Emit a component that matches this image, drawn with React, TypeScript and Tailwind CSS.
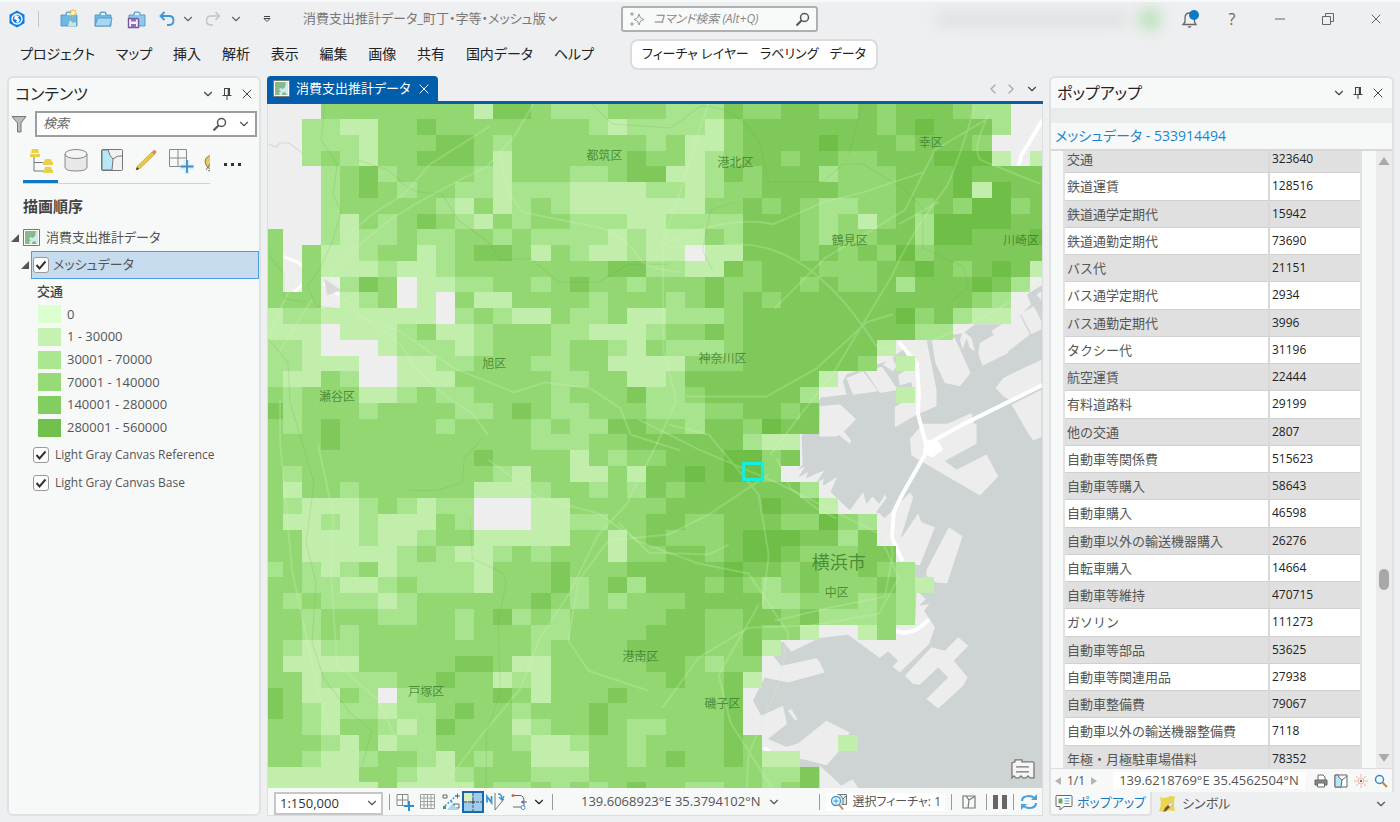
import type { ReactNode } from "react"
import { ChevronDown, ChevronLeft, ChevronRight, Minus, X } from "lucide-react"

const menus = ["プロジェクト", "マップ", "挿入", "解析", "表示", "編集", "画像", "共有", "国内データ", "ヘルプ"]

const legend = [
  { label: "0", color: "bg-[#dcffd0]" },
  { label: "1 - 30000", color: "bg-[#c4f2b0]" },
  { label: "30001 - 70000", color: "bg-[#abe691]" },
  { label: "70001 - 140000", color: "bg-[#97db77]" },
  { label: "140001 - 280000", color: "bg-[#83ce60]" },
  { label: "280001 - 560000", color: "bg-[#71c04b]" },
]

const rows = [
  ["交通", "323640"],
  ["鉄道運賃", "128516"],
  ["鉄道通学定期代", "15942"],
  ["鉄道通勤定期代", "73690"],
  ["バス代", "21151"],
  ["バス通学定期代", "2934"],
  ["バス通勤定期代", "3996"],
  ["タクシー代", "31196"],
  ["航空運賃", "22444"],
  ["有料道路料", "29199"],
  ["他の交通", "2807"],
  ["自動車等関係費", "515623"],
  ["自動車等購入", "58643"],
  ["自動車購入", "46598"],
  ["自動車以外の輸送機器購入", "26276"],
  ["自転車購入", "14664"],
  ["自動車等維持", "470715"],
  ["ガソリン", "111273"],
  ["自動車等部品", "53625"],
  ["自動車等関連用品", "27938"],
  ["自動車整備費", "79067"],
  ["自動車以外の輸送機器整備費", "7118"],
  ["年極・月極駐車場借料", "78352"],
]

// one character per mesh cell, the digit is the class, "." has no cell
const mesh = [
  "...33333333144322233" + "322243344334344432" + "2..",
  "..221133433333333212" + "222134444444345444" + "2..",
  "..222133344323333333" + "231134444544434443" + "...",
  "..232133444313333334" + "331234434433444555" + "1.1",
  "...23423333213332234" + "411243444233344454" + "444",
  "...23432332212221111" + "221233444433344451" + "544",
  "...23333321312321111" + "111334343223343435" + "534",
  "...21323432132332221" + "122224443231342555" + "544",
  "3..21223223323222212" + "111324443233442554" + "445",
  "3.311233123443132112" + "11.114443434353444" + "444",
  "3.311121123333333344" + "221143444333445434" + "541",
  "3.3.243.112233234332" + "333433443433424445" + "42.",
  "333.123.1.3113333233" + "323434344444444443" + "2..",
  "122111111.2321132231" + "122234444444453421" + "1..",
  "111.1112311233322111" + "23343444444444" + "22.....",
  "221...12221233323321" + "322234444444" + "1........",
  "22111..1122333223311" + "11333444444" + "3.1.......",
  "21132..1113333322331" + "124444444" + "1...........",
  "32333112322333323334" + "22344444" + "2....1.......",
  "42333233332234322333" + "2223344" + "34............",
  "32343333323333232244" + "33244354" + "4............",
  "33343333333333222334" + "44444211" + ".............",
  "33333333333433331323" + "34445534" + ".............",
  "32333333333321331131" + "4454553" + "..............",
  "31332333333111233232" + "434444442" + "............",
  "32111232122...113333" + "3444445441" + "...........",
  "31121211132...112233" + "443344433532" + ".........",
  "33111211233111113313" + "433345554424" + ".........",
  "33111112321123233313" + "3443455433344" + "........",
  "23212312222133343334" + "44445443433432" + ".......",
  "33221123222133342342" + "444343234333421" + "......",
  "32322212333333432323" + "33444422333232" + ".......",
  "33233322332342323333" + "34433443422232" + ".......",
  "33232333332333223333" + "444334331..13" + "........",
  "32122333333333233334" + "4443341" + "..............",
  "31111333334431133333" + "443233" + "...............",
  "33122223343312133333" + "343341" + "...............",
  "431132.2333343133343" + "33334" + "................",
  "43212212234332333433" + "33334" + "................",
  "33213321243331233432" + "23334" + "................",
  "33321312233332112332" + "333343....1" + "..........",
  "33211233213233111332" + "34334311" + ".............",
  "11111332112333222333" + "333333224" + "............",
  "11111131111322323234" + "332233234" + "............",
]

const meshColors: Record<string, string> = {
  "1": "#c1eeaa",
  "2": "#a8e38d",
  "3": "#93d772",
  "4": "#7fc95b",
  "5": "#6fbe48",
}

const cellX = (c: number) => (c === 0 ? 0 : 14.7 + (c - 1) * 19.13)
const cellY = (r: number) => (r === 0 ? 0 : 15 + (r - 1) * 15.77)

const labels = [
  { x: 336, y: 56, name: "都筑区" },
  { x: 467, y: 63, name: "港北区" },
  { x: 662, y: 43, name: "幸区" },
  { x: 581, y: 141, name: "鶴見区" },
  { x: 752, y: 141, name: "川崎区" },
  { x: 226, y: 264, name: "旭区" },
  { x: 454, y: 259, name: "神奈川区" },
  { x: 69, y: 297, name: "瀬谷区" },
  { x: 568, y: 492, name: "中区" },
  { x: 372, y: 556, name: "港南区" },
  { x: 158, y: 591, name: "戸塚区" },
  { x: 454, y: 603, name: "磯子区" },
]

const MeshCells = () => {
  const cells: ReactNode[] = []
  mesh.forEach((line, r) => {
    let c = 0
    while (c < line.length) {
      const start = c
      const value = line[start]
      while (c < line.length && line[c] === value) c++
      if (value === ".") continue
      const x = Math.round(cellX(start))
      const y = Math.round(cellY(r))
      cells.push(
        <rect key={`${r}-${start}`} x={x} y={y} width={Math.round(cellX(c)) - x} height={Math.round(cellY(r + 1)) - y} fill={meshColors[value]} />
      )
    }
  })
  return <g shapeRendering="crispEdges">{cells}</g>
}

const MapCanvas = () => (
  <svg viewBox="0 0 773 684" preserveAspectRatio="xMinYMin slice" className="block h-full w-full bg-[#eeeeee]" role="img" aria-label="地図">
    {/* harbour */}
    <path
      fill="#ced3d4"
      d="M773 181L758 190 762 200 742 220 706 220 694 229 665 233 640 240 621 256 578 270 574 277 578 290 552 293 533 332 534 360 512 385 552 378 580 405 611 409 640 440 640 500 560 530 497 540 480 600 497 635 552 684 773 684z"
    />
    <g transform="translate(381 -28) scale(.3333)" fill="#ededee">
      <path d="M1024 764l84-52 32 63-74 57zM1112 712l40-22 22 45v25l-30 14zM1160 655l14-10v27zM990 800l55-32 30 62-77 38-13-38zM845 785h70l47 105-32 40-45-10-28-60zM930 790l10-25 25 20 10 40-15-10-10-30-12 35zM765 805l65-15 30 150v50l-60 25-65 38v-62l25-14 30-10-5-50-35 10-5-30 30-20zM590 905l50-20 45 60-75 10zM647 885l50-14 47 70-54 9zM700 865l25-25 15 30-10 15zM511 885l60 0 12 60-72 12zM511 990l60-6 48 45-40 40-20 11h-50zM1037 935l23-30 114-55v80l-89 45-25-15zM1085 985l89-45v140h-34zM820 1075l145-65 15 70H820z" />
    </g>
    <g transform="translate(381 326) scale(.3333)" fill="#ededee">
      <path d="M780 25l40-45h160v60L885 92l35 26 90-46 35 66-55 57L785 75zM1130 0h44v20l-24 10zM550 0h30l25 30-5 10zM396 102h50l-10 20 30-15-20 35 30-18-8 20 56-25-25 40 24-15-6 25 45-30-25 60 30 5v40l-90-40-90-55zM600 240l40-55 10 35 18-22 20 22 18-28 5 10-30 40-10 50zM685 280l50-45 45-50 10 15-40 132h-65zM750 330l55-82 10 27 40 15-45 115-35-10-30-30zM830 418l67-128 41 27-46 141-32-2-30-20zM800 480l28 25-20 20 30-5-15 20 32 50-17 50-88 85-22-17 17-18-30-28-25 20-95-70-85 10-85 41-30-38-60 0v-60h172l290 0z" />
      <path d="M281 640h60l54 65 105-22 10 10 15 32-110 30-70-15-35 70 25 45 65-30 12 55-57 45 55 23 35-10 85-68 70 35-30 55-40 43-70-18-100 0-80-80zM415 840l10-5 18 30-6 5zM765 735l80-85 40 10 40-40 30 25-43 45 41 50-13 25-75 68-35-28 65-65-30-30-55 52-20-2zM511 1005l64 60 33-20 19 28H511z" />
    </g>
    <g fill="none" stroke="#fff" strokeLinecap="round" strokeLinejoin="round">
      <path d="M773 17l-21 35-3 13M631 239l17 20 2 30-1 20 9 34M773 281l-81 40-20 11-14 8M659 345l-25 44-9 18-2 26 10 22M497 644l20 17 18 6M611 516q24 24 48 0" strokeWidth="4" />
      <path d="M657 336l12 2 4 7-10 7-8-4z" fill="#fff" strokeWidth="2" />
      <path d="M14 152l16 6 14 14-18 16M56 180l14 10" strokeWidth="3" />
    </g>
    <path d="M56 174l17 12-14 5z" fill="#d9d9d9" />
    <path d="M0 40l8 3 4-4h9l28 21 18 8" fill="none" stroke="#d6d6d8" />
    <MeshCells />
    {/* roads and rivers seen through the mesh */}
    <g fill="none" stroke="#d4f5bd" strokeOpacity=".24" strokeWidth="2" strokeLinejoin="round">
      <path d="M57 178q40-50 90-78t70-36l28-30 20-34M222 22l-60 38-26 30-32 20-28 24M232 50q5 38 22 58l80 16q25 10 40 34 12 8 40 10" />
      <path d="M76 194l18 20q40 20 50 45 25 30 60 50l16 22M90 212l40 14 56 38 60 24 30-10 46 6 30 20 10 26 50 16" />
      <path d="M0 235l14-34 20-40M10 250l34-55M12 296v40l12 130 26 120 10 32M50 340l15 70-2 60 6 90 40 34 20 42" />
      <path d="M440 0l-14 40-18 60-14 36 1 110 13 50-20 44-30 60-28 30-30 60-30 46-18 48-40 48-30 40" />
      <path d="M220 355l50 38 60 16 40 28 60 22 50 10 40 60-10 50-30 70-2 38 30 30M490 500l-40 70 12 48 42 66" />
      <path d="M397 144l60-3q80-10 150 100l20 8q90-28 170-90M506 204l50-50 80-48 30-60 50-30M706 2q-18 60-28 80-38 50-54 88l-60 100-32 40-30 40M418 292l80 0 50-28 50-46 26-8" />
      <path d="M395 140q60-30 110-20l50-22 40-10 60-20M630 120l40-22M720 10q-18 36-8 46l60 24" />
      <path d="M400 320l40 10 50 60 10 60-6 50M500 370l-60 40-40 20-60 6-30 40-10 60 20 30 60 20M370 315l60 30 80 34 100 50 20 44-20 36-70 12-60 2-50 30-36 50" />
      <path d="M620 420l4 30-8 42-60 12-50 12M508 354l14 30 26 20 20 10M460 440l-20 10-60-2-30-30" />
    </g>
    <g fill="none" stroke="#5a9a45" strokeOpacity=".16">
      <path d="M57 0l-4 36 16 24-4 30 8 18-8 28-14 30-12 16 10 20 18 2M0 150l16 20v24l22 4M90 56l30 10 20 18 10 4 24 2 16 26 30 22 12 18 30-2 28 24 40 0 30-18h40" />
      <path d="M324 0l20 20 58 4 30-22q40 0 60 40l8 36 54 0 20-18h20l40 24 20 20v40l40 18 6 20-22 20M594 0l-14 50" />
      <path d="M0 234l20 24 2 40 12 40 12 40-8 60 10 40-4 60 12 36 26 34 22 18-10 34M214 334l-18 20-2 24-26 8h-26M202 414l2 40 30 14 4 10-8 40 2 70-14 40v68M466 98l-24 8-8 40 10 20" />
    </g>
    <g fill="#397a27" fillOpacity=".8" className="font-['Noto_Sans_CJK_JP',sans-serif] text-xs">
      {labels.map((l) => (
        <text key={l.name} x={l.x} y={l.y} textAnchor="middle">{l.name}</text>
      ))}
      <text x="570" y="464" textAnchor="middle" className="text-lg">横浜市</text>
    </g>
    <rect x="475" y="359" width="19" height="16" fill="none" stroke="#14efe0" strokeWidth="3" />
    <g fill="#f5f5f5" stroke="#777" strokeWidth="1.3">
      <path d="M743 673v-15l3-1v-2h7v2h11q1 0 1 2v14h-4l-2-2-2 2h-3l-2-2-2 2h-3l-2-2z" />
      <path d="M747 662h13M747 667h13" />
    </g>
  </svg>
)

const MapIcon = () => (
  <svg viewBox="0 0 17 17" className="size-[17px] shrink-0">
    <path d="M.5.5h16v16H.5z" fill="#fff" stroke="#777" />
    <path d="M2 2h13v13H2z" fill="#cdeaf5" />
    <path d="M2 2h11l-1 5-2 2-3-1-1 2 2 1-2 2 1 2H2zM9 13l3-1 2 3H9z" fill="#86ba86" />
  </svg>
)

const PinIcon = () => (
  <svg viewBox="0 0 12 14" className="h-3.5 w-3 shrink-0" fill="none" stroke="#444">
    <path d="M3 1.5h6M3.5 1.5v7M8.5 1.5v7M1.5 8.5h9M6 9v4" />
    <path d="M7.5 2v6" strokeWidth="1.5" />
  </svg>
)

const SearchIcon = ({ className }: { className: string }) => (
  <svg viewBox="0 0 14 14" className={className} fill="none" stroke="currentColor" strokeWidth="1.5">
    <circle cx="8.5" cy="5.5" r="4" />
    <path d="M5.5 8.5l-5 5" strokeWidth="2" />
  </svg>
)

const Folder = ({ kind }: { kind: "new" | "open" | "save" }) => (
  <svg viewBox="0 0 20 20" className="size-5">
    <path d="M2 6h5V4q0-1 1-1h4q1 0 1 1v2h5v11H2z" fill={kind === "save" ? "#8ec8ea" : "#6db9e4"} stroke="#3f93c4" strokeWidth=".8" />
    <path d="M8 4h4v2H8z" fill="#eee" />
    {kind === "new" && (
      <>
        <path d="M9 17l2-6 3 3 3-1v4z" fill="#cfe9c6" />
        <path d="M14 0v8M10 4h8M11 1l6 6M17 1l-6 6" stroke="#e9c03c" strokeWidth="1.2" />
        <circle cx="14" cy="4" r="2" fill="#fff4b8" />
      </>
    )}
    {kind === "open" && <path d="M2 17l2.5-8H19l-2 8z" fill="#a6d6f0" stroke="#3f93c4" strokeWidth=".8" />}
    {kind === "save" && (
      <>
        <path d="M1.5 9.5h9l1 1v8h-10z" fill="#f6f2fb" stroke="#7353a5" strokeWidth="1.4" />
        <path d="M4 9.5h5v3H4zM4 15h5v3.5H4z" fill="#8b6fb7" />
      </>
    )}
  </svg>
)

const Checkbox = ({ id }: { id: string }) => (
  <span className="relative grid size-4 shrink-0 place-items-center">
    <input id={id} type="checkbox" defaultChecked className="peer size-4 appearance-none rounded-[3px] border border-[#9a9a9a] bg-white" />
    <svg viewBox="0 0 16 16" className="pointer-events-none absolute inset-0 size-4 opacity-0 peer-checked:opacity-100" fill="none" stroke="#333" strokeWidth="2">
      <path d="M3.5 8l3 3.5 6-7" />
    </svg>
  </span>
)

const PanelButtons = () => (
  <div className="flex items-center gap-1.5 text-[#444]">
    <button aria-label="メニュー"><ChevronDown className="size-3.5" /></button>
    <button aria-label="固定"><PinIcon /></button>
    <button aria-label="閉じる"><X className="size-4" strokeWidth={1.5} /></button>
  </div>
)

const Divider = () => <span className="block h-4 w-px shrink-0 bg-[#999]" />

const TitleBar = () => (
  <header className="flex h-[34px] shrink-0 items-center pr-4 pl-2">
    <svg viewBox="0 0 18 18" className="size-[18px]">
      <path d="M9 .5l7.500 4.200v8.600L9 17.500l-7.500-4.200V4.700z" fill="#0e7be6" />
      <circle cx="9" cy="9" r="5" fill="none" stroke="#fff" strokeWidth="1.4" />
      <path d="M7 5l4 1-1 2 2 2-2 3-2-1 1-2-3-1z" fill="#fff" />
    </svg>
    <span className="ml-3 h-4 w-px bg-[#c5c5c5]" />
    <nav aria-label="クイックアクセス" className="ml-5 flex items-center text-[#666]">
      <button aria-label="新規"><Folder kind="new" /></button>
      <button aria-label="開く" className="ml-3.5"><Folder kind="open" /></button>
      <button aria-label="保存" className="ml-3.5"><Folder kind="save" /></button>
      <button aria-label="元に戻す" className="ml-3">
        <svg viewBox="0 0 16 16" className="size-4" fill="none" stroke="#3c97d3" strokeWidth="1.8"><path d="M5.500 1L1.500 5l4 4M2 5h8q4.500 0 4.500 4.500T10 14H8" /></svg>
      </button>
      <button aria-label="元に戻す履歴" className="ml-1.5"><ChevronDown className="size-3.5" /></button>
      <button aria-label="やり直し" className="ml-2.5">
        <svg viewBox="0 0 16 16" className="size-4" fill="none" stroke="#c2c4c6" strokeWidth="1.5"><path d="M10.500 1l4 4-4 4M14 5H6Q1.500 5 1.500 9.500T6 14h2" /></svg>
      </button>
      <button aria-label="やり直し履歴" className="ml-2"><ChevronDown className="size-3.5" /></button>
      <button aria-label="カスタマイズ" className="ml-5">
        <svg viewBox="0 0 8 8" className="size-2" fill="none" stroke="#444"><path d="M1 1.500h6M1 3.500h6L4 6.500z" /></svg>
      </button>
    </nav>
    <button className="ml-8 flex w-[318px] items-center text-[13px] whitespace-nowrap text-[#777] [font-feature-settings:'palt']">
      消費支出推計データ_町丁・字等・メッシュ版
      <ChevronDown className="size-3.5" />
    </button>
    <label className="flex h-[26px] w-[197px] shrink-0 items-center gap-2 rounded-[3px] border-2 border-[#aeb0b2] bg-[#f8f9f9] px-1.5">
      <svg viewBox="0 0 16 16" className="size-4 shrink-0" fill="none" stroke="#999"><path d="M10 3l1.500 4L15 8.500 11.500 10 10 14 8.500 10 5 8.500 8.500 7zM3 1v4M1 3h4M3 11v4M1 13h4" /></svg>
      <input type="text" placeholder="コマンド検索 (Alt+Q)" className="w-full min-w-0 bg-transparent text-xs italic outline-none [font-feature-settings:'palt'] placeholder:text-[#888]" />
      <SearchIcon className="size-3.5 shrink-0 text-[#555]" />
    </label>
    <div className="ml-auto flex items-center text-[#666]">
      <span className="h-3.5 w-48 bg-[#d2d3d5] opacity-60 blur-sm" />
      <span className="ml-3 size-5 rounded-full bg-[#a9dba9] blur-sm" />
      <button aria-label="通知" className="ml-5">
        <svg viewBox="0 0 20 20" className="size-5" fill="none" stroke="#666" strokeWidth="1.3">
          <path d="M3 15.500h13l-1.500-2.500V9Q14 4 9.500 4T5 9v4zM8 17.500q1.500 1 3 0" />
          <circle cx="14" cy="6" r="5" fill="#1079c4" stroke="none" />
        </svg>
      </button>
      <button aria-label="ヘルプ" className="ml-6 w-4 text-base">?</button>
      <button aria-label="最小化" className="ml-8"><Minus className="size-4" strokeWidth={1.5} /></button>
      <button aria-label="元のサイズに戻す" className="ml-8">
        <svg viewBox="0 0 16 16" className="size-4" fill="none" stroke="#666"><path d="M2.500 5.500h8v8h-8zM5.500 5.500v-3h8v8h-3" /></svg>
      </button>
      <button aria-label="終了" className="ml-8"><X className="size-4" strokeWidth={1.5} /></button>
    </div>
  </header>
)

const MenuBar = () => (
  <nav className="flex h-9 shrink-0 items-center pl-5 text-[#222] [font-feature-settings:'palt']">
    <div className="flex w-[610px] items-center justify-between pr-9 text-sm whitespace-nowrap">
      {menus.map((menu) => (
        <button key={menu}>{menu}</button>
      ))}
    </div>
    <div className="flex h-[31px] w-[248px] items-center justify-between rounded-lg border-2 border-[#dcdce0] bg-white px-2.5 text-[13px] whitespace-nowrap">
      <button>フィーチャ レイヤー</button>
      <button>ラベリング</button>
      <button>データ</button>
    </div>
  </nav>
)

const ContentsPanel = () => (
  <aside className="flex w-[254px] shrink-0 flex-col rounded-md border-2 border-[#dfe1e3] bg-[#f7f9f9] text-[#555]">
    <div className="flex h-8 shrink-0 items-center justify-between pr-1 pl-1.5">
      <h2 className="text-base text-[#222] [font-feature-settings:'palt']">コンテンツ</h2>
      <PanelButtons />
    </div>
    <div className="flex h-7 shrink-0 items-center gap-2 px-0.5">
      <svg viewBox="0 0 16 18" className="h-[18px] w-4 shrink-0" stroke="#777"><path d="M1 1.500h14L10 8v9H6.500V8z" fill="#bbb" /></svg>
      <label className="flex h-[26px] min-w-0 flex-1 items-center border-2 border-[#9c9e9f] bg-white pr-1 pl-1.5">
        <input type="text" aria-label="検索" placeholder="検索" className="w-full min-w-0 text-[13px] italic outline-none placeholder:text-[#666]" />
        <SearchIcon className="size-3.5 shrink-0 text-[#555]" />
        <ChevronDown className="ml-2.5 size-3.5 shrink-0" />
      </label>
    </div>
    <div className="mt-1.5 ml-3.5 flex h-10 shrink-0">
      <div className="flex w-[187px] items-start gap-2.5 overflow-hidden border-b border-[#cfd1d2] pt-1">
        <button aria-label="描画順序" className="flex h-full w-[35px] shrink-0 justify-center border-b-3 border-[#1079c4]">
          <svg viewBox="0 0 26 26" className="size-[26px]" fill="none" stroke="#777"><path d="M6 8v15h9M6 14.500h9" /><path d="M4 1h6l1 4H3zM2 6h10v3H2zM17 11h6l1 3h-8zM15 14h10v3H15zM17 19h6l1 3h-8zM15 22h10v3H15z" fill="#e8d04b" stroke="none" /></svg>
        </button>
        <button aria-label="データソース" className="-ml-1">
          <svg viewBox="0 0 24 24" className="size-6" fill="#e8e8ea" stroke="#888"><path d="M1 6v13q0 4 11 4t11-4V6" /><ellipse cx="12" cy="6" rx="11" ry="4.5" fill="#f5f5f5" /></svg>
        </button>
        <button aria-label="選択" className="ml-0.5">
          <svg viewBox="0 0 24 24" className="size-6" stroke="#777"><rect x="1.5" y="1.5" width="21" height="21" rx="1" fill="#f2f2f2" /><path d="M2 2h6q2 7 5 9l-1 11H2z" fill="#b6e8f8" /><path d="M13 11q4-4 9-3" fill="none" /></svg>
        </button>
        <button aria-label="編集">
          <svg viewBox="0 0 24 24" className="size-6"><path d="M2 22l1.500-4L18 4l2.500 2.500L6 20.500z" fill="#e5c843" stroke="#b99b28" strokeWidth=".6" /><path d="M18 4l2-2q1.500 0 2.500 2l-2 2.500z" fill="#e1796f" /><path d="M2 22l1-3 2 2z" fill="#333" /></svg>
        </button>
        <button aria-label="スナップ" className="shrink-0">
          <svg viewBox="0 0 26 26" className="size-[26px]" fill="none" stroke="#888"><path d="M1.500 1.500h17v17h-17zM10 1.500v17M1.500 10h17" /><path d="M19 12v14M12 19h14" stroke="#d9f0fb" strokeWidth="5" /><path d="M19 12v13M12.500 18.500h13" stroke="#3c8fc4" strokeWidth="1.8" /></svg>
        </button>
        <button aria-label="ラベリング" className="shrink-0">
          <svg viewBox="0 0 14 24" className="h-6 w-3.5"><path d="M1 13q1-5 7-6v14q-6 0-7-8z" fill="#e8c766" stroke="#9a7a39" /><path d="M2 22l4-6M4 23q4 0 6-4" stroke="#777" fill="none" /></svg>
        </button>
      </div>
      <button aria-label="その他" className="ml-3.5 flex h-8 items-center gap-1 self-end pb-2">
        <span className="size-[3px] bg-[#333]" />
        <span className="size-[3px] bg-[#333]" />
        <span className="size-[3px] bg-[#333]" />
      </button>
    </div>
    <h3 className="mt-2.5 ml-3.5 text-[15px] leading-6 font-bold text-[#444]">描画順序</h3>
    <div className="mt-1.5 flex h-[27px] items-center pl-0.5 text-[13px] [font-feature-settings:'palt']">
      <svg viewBox="0 0 8 8" className="mr-1 size-2"><path d="M8 0v8H0z" fill="#555" /></svg>
      <MapIcon />
      <span className="ml-1.5">消費支出推計データ</span>
    </div>
    <div className="flex items-center pl-3">
      <svg viewBox="0 0 8 8" className="mr-0.5 size-2"><path d="M8 0v8H0z" fill="#555" /></svg>
      <div className="flex h-7 flex-1 items-center gap-1 border border-[#4aa0d8] bg-[#c6dcee] px-px">
        <Checkbox id="layer-mesh" />
        <label htmlFor="layer-mesh" className="text-[13px] [font-feature-settings:'palt']">メッシュデータ</label>
      </div>
    </div>
    <h4 className="ml-7 text-[13px] leading-6 font-medium text-[#444]">交通</h4>
    <ul className="ml-[29px] flex h-[136px] flex-col">
      {legend.map((item) => (
        <li key={item.label} className="flex flex-1 items-center gap-1.5 text-[13px]">
          <span className={`h-[18px] w-[23px] ${item.color}`} />
          {item.label}
        </li>
      ))}
    </ul>
    <div className="mt-0.5 ml-6 text-xs">
      <div className="flex h-7 items-center gap-1.5">
        <Checkbox id="layer-reference" />
        <label htmlFor="layer-reference">Light Gray Canvas Reference</label>
      </div>
      <div className="flex h-7 items-center gap-1.5">
        <Checkbox id="layer-base" />
        <label htmlFor="layer-base">Light Gray Canvas Base</label>
      </div>
    </div>
  </aside>
)

const StatusBar = () => (
  <div className="flex h-[27px] shrink-0 items-center bg-[#f7f9f9] pr-1 pl-1.5 text-[#555]">
    <div className="relative h-[23px] w-[109px] shrink-0">
      <select aria-label="縮尺" className="size-full appearance-none border-2 border-[#c4c6c7] bg-white pl-1 text-[13px] leading-4 text-[#333]">
        <option>1:150,000</option>
      </select>
      <ChevronDown className="pointer-events-none absolute top-1.5 right-1 size-3.5" />
    </div>
    <div className="ml-1.5 flex items-center">
      <Divider />
      <button aria-label="追加" className="ml-1.5">
        <svg viewBox="0 0 18 18" className="size-[18px]" fill="none" stroke="#888"><path d="M1 1.500h11v11H1zM6.500 1v11M1 7h11" /><path d="M13 8v10M8 13h10" stroke="#2f8fc8" strokeWidth="2" /></svg>
      </button>
      <button aria-label="グリッド" className="ml-1.5">
        <svg viewBox="0 0 16 16" className="size-4" fill="none" stroke="#a0a0a0"><path d="M.5.5h14v14H.5zM.5 4h14M.5 7.500h14M.5 11h14M4 .5v14M7.500.5v14M11 .5v14" /></svg>
      </button>
      <button aria-label="レイアウト" className="ml-1.5">
        <svg viewBox="0 0 18 18" className="size-[18px]" fill="none" stroke="#666"><path d="M1 2h4v3H1zM12 11h5v4h-5zM13 3h5M15.500.5v5" /><path d="M3 13L15 2M9 8l3 4" stroke="#3c97d3" strokeDasharray="2 1.5" strokeWidth="1.5" /><path d="M1 16h3v-3H1z" fill="#4b9a57" stroke="none" /><path d="M5 17l5-6 7 6z" fill="#a9d9f0" stroke="none" /></svg>
      </button>
      <button aria-label="補正" className="ml-0.5 border-2 border-[#1966a8] bg-[#9dccec]">
        <svg viewBox="0 0 18 18" className="size-[18px]" fill="none" stroke="#555"><path d="M0 0h8v8H0z" fill="#d9edc4" stroke="none" /><path d="M9 0v18M0 9h18" strokeDasharray="3 1" /><path d="M8 8h2v2H8z" fill="#555" /></svg>
      </button>
      <button aria-label="回転" className="ml-0.5">
        <svg viewBox="0 0 20 18" className="h-[18px] w-5" fill="none"><path d="M1 9.500V3.500l4.500 6V3" stroke="#3c97d3" strokeWidth="1.8" /><path d="M9 0v17l9-11" stroke="#777" /><path d="M12 1q4 0 4 5M13 4l3 3 2-4" stroke="#3c97d3" strokeWidth="1.4" /></svg>
      </button>
      <button aria-label="トレース" className="ml-1">
        <svg viewBox="0 0 18 18" className="size-[18px]" fill="none" stroke="#666"><path d="M3 2.500h7q4 0 4 6M14 10v4H3M11 9h6" /><circle cx="3" cy="2.5" r="1.5" fill="#d9614b" stroke="none" /><circle cx="13" cy="9" r="1.5" fill="#7e62b8" stroke="none" /><circle cx="13" cy="14.5" r="2" fill="#fff" stroke="#3c97d3" /></svg>
      </button>
      <button aria-label="スナップ設定" className="ml-1 text-[#222]"><ChevronDown className="size-3.5" /></button>
      <span className="ml-1.5"><Divider /></span>
    </div>
    <button className="ml-7 flex items-center gap-1.5 text-[13px] whitespace-nowrap">
      139.6068923°E 35.3794102°N
      <ChevronDown className="size-3.5" />
    </button>
    <div className="ml-auto flex items-center gap-1.5">
      <Divider />
      <button className="flex items-center gap-1 bg-white px-1 text-xs whitespace-nowrap [font-feature-settings:'palt']">
        <svg viewBox="0 0 18 18" className="size-[18px]" fill="none" stroke="#777"><path d="M7.500 1.500h9v10h-5" fill="#d3edf7" /><path d="M10 2l3 4 3-3M13 6v5" /><circle cx="6" cy="8" r="4.5" fill="#e8f6fd" stroke="#3c97d3" strokeWidth="1.3" /><path d="M3.500 8h5M6 5.500v5" stroke="#3c97d3" /><path d="M9 11.500l4 5" stroke="#c18646" strokeWidth="2" /></svg>
        選択フィーチャ: 1
      </button>
      <Divider />
      <button aria-label="選択を表示" className="mx-1">
        <svg viewBox="0 0 14 14" className="size-3.5" fill="none" stroke="#777" strokeWidth="1.2"><path d="M1 1h12v12H1zM4 1l3 4 5-3M7 5l-1 8" /></svg>
      </button>
      <Divider />
      <button aria-label="一時停止" className="flex gap-1">
        <span className="h-3.5 w-[5px] bg-[#666]" />
        <span className="h-3.5 w-[5px] bg-[#666]" />
      </button>
      <Divider />
      <button aria-label="更新">
        <svg viewBox="0 0 18 18" className="size-[18px]" fill="none" stroke="#4ba3dc" strokeWidth="2.2"><path d="M2 8q0-5 7-5 4 0 6 3M16 10q0 5-7 5-4 0-6-3" /><path d="M17 1v6h-6zM1 17v-6h6z" fill="#4ba3dc" stroke="none" /></svg>
      </button>
    </div>
  </div>
)

const MapView = () => (
  <main className="flex min-w-0 flex-1 flex-col">
    <div className="flex h-7 shrink-0 items-end justify-between border-b-3 border-[#0c5ca8]">
      <div className="flex h-full items-center gap-1.5 rounded-t bg-[#005eab] px-1.5 text-white">
        <MapIcon />
        <span className="text-[13px] whitespace-nowrap [font-feature-settings:'palt']">消費支出推計データ</span>
        <button aria-label="タブを閉じる"><X className="size-4" strokeWidth={1.5} /></button>
      </div>
      <div className="flex items-center gap-0.5 pb-1 text-[#aaa]">
        <button aria-label="前へ"><ChevronLeft className="size-4" /></button>
        <button aria-label="次へ"><ChevronRight className="size-4" /></button>
        <button aria-label="一覧" className="mx-1 text-[#444]"><ChevronDown className="size-3.5" /></button>
      </div>
    </div>
    <div className="flex min-h-0 flex-1 flex-col border-x border-b border-[#dcdee0]">
      <div className="min-h-0 flex-1 overflow-hidden">
        <MapCanvas />
      </div>
      <StatusBar />
    </div>
  </main>
)

const PopupPanel = () => (
  <aside className="flex w-[345px] shrink-0 flex-col text-[#555]">
    <div className="flex min-h-0 flex-1 flex-col rounded-t-md border-2 border-b-0 border-[#dfe1e3] bg-[#f7f9f9]">
      <div className="flex h-[30px] shrink-0 items-center justify-between px-1.5">
        <h2 className="text-base text-[#222] [font-feature-settings:'palt']">ポップアップ</h2>
        <PanelButtons />
      </div>
      <div className="h-[15px] shrink-0 bg-[#eaebeb]" />
      <div className="flex h-7 shrink-0 items-center border-b-2 border-[#d8d8d8] pl-1 text-sm text-[#1a86cf] [font-feature-settings:'palt']">メッシュデータ - 533914494</div>
      <div className="flex min-h-0 flex-1">
        <div className="min-w-0 flex-1 overflow-hidden pr-3.5 pl-3">
          <table className="-mt-1.5 h-[628px] w-full table-fixed border-collapse border-x-2 border-[#e2e2e2] bg-white">
            <tbody>
              {rows.map(([name, value]) => (
                <tr key={name} className="border-y border-[#d0d0d0] text-[13px] leading-5 odd:bg-[#e0e0e0]">
                  <th scope="row" className="border-r-2 border-[#d8d8d8] p-0 pl-0.5 text-left font-normal whitespace-nowrap">{name}</th>
                  <td className="w-[92px] p-0 pl-0.5 text-xs text-[#222]">{value}</td>
                </tr>
              ))}
            </tbody>
          </table>
        </div>
        <div className="flex w-4 shrink-0 flex-col items-center bg-[#ebebec] py-1.5">
          <svg viewBox="0 0 12 8" className="h-2 w-3"><path d="M6 0l5.500 8H.5z" fill="#aaa" /></svg>
          <span className="flex-[27]" />
          <span className="h-[21px] w-2.5 rounded-full bg-[#a8a8a8]" />
          <span className="flex-[11]" />
          <svg viewBox="0 0 12 8" className="h-2 w-3"><path d="M6 8L.5 0h11z" fill="#aaa" /></svg>
        </div>
      </div>
      <div className="flex h-6 shrink-0 items-center border-t border-[#ddd] px-1 text-xs">
        <svg viewBox="0 0 6 8" className="h-2 w-1.5"><path d="M6 0v8L0 4z" fill="#b5b5b5" /></svg>
        <span className="mx-1.5">1/1</span>
        <svg viewBox="0 0 6 8" className="h-2 w-1.5"><path d="M0 0v8l6-4z" fill="#b5b5b5" /></svg>
        <span className="ml-4 bg-white px-1.5 text-[13px] whitespace-nowrap">139.6218769°E 35.4562504°N</span>
        <div className="ml-auto flex gap-1.5">
          <button aria-label="印刷">
            <svg viewBox="0 0 14 14" className="size-3.5" stroke="#666"><path d="M4 6V1h5l2 2v3" fill="#fff" /><path d="M1 6h12v5H1z" fill="#888" /><path d="M3.500 9h7v4h-7z" fill="#fff" /></svg>
          </button>
          <button aria-label="ハイライト">
            <svg viewBox="0 0 14 14" className="size-3.5" stroke="#666"><path d="M1 1h12v12H1z" fill="#fff" /><path d="M1 1h3q1 4 4 5L7 13H1z" fill="#b6e8f8" /><path d="M8 6l5-4" /></svg>
          </button>
          <button aria-label="フラッシュ">
            <svg viewBox="0 0 14 14" className="size-3.5" fill="none" stroke="#f0b3a3"><path d="M7 0v3M7 11v3M0 7h3M11 7h3M2 2l2 2M12 2l-2 2M2 12l2-2M12 12l-2-2" /><circle cx="7" cy="7" r="3" fill="#fdf0ec" /><path d="M6.500 6.500h1v1h-1z" stroke="#444" /></svg>
          </button>
          <button aria-label="ズーム">
            <svg viewBox="0 0 14 14" className="size-3.5" fill="none"><circle cx="5.5" cy="5.5" r="4" stroke="#2e8fd0" strokeWidth="1.5" /><path d="M8.500 8.500l4.500 4.500" stroke="#c18646" strokeWidth="2" /></svg>
          </button>
        </div>
      </div>
    </div>
    <div className="flex h-6 shrink-0 items-center text-[13px] [font-feature-settings:'palt']">
      <button className="flex h-full items-center gap-1 rounded-b border-2 border-t-0 border-[#dfe1e3] bg-[#f7f9f9] px-1 text-[#1a78bd]">
        <svg viewBox="0 0 18 18" className="size-[18px]" stroke="#666"><path d="M2 1.500h14q1 0 1 1v9q0 1-1 1H9L5 16v-3.500H2q-1 0-1-1v-9q0-1 1-1z" fill="#fff" /><path d="M3.500 4.500h4v5h-4z" fill="#6cab66" stroke="none" /><path d="M9.500 4.500h5M9.500 7h5M9.500 9.500h5" stroke="#54a9dd" /></svg>
        ポップアップ
      </button>
      <button className="ml-1.5 flex items-center gap-1.5">
        <svg viewBox="0 0 18 18" className="size-[18px]"><path d="M2 2q5 2 8 0t7 0q-2 6 0 14-5-1-8 0t-8 0q3-6 1-14z" fill="#ebd54f" /><path d="M13 7l2 2-5 5q-2 3-5 3 1-1 2-4z" fill="#6e5136" /><path d="M13 7l2 2-3 3-2-2z" fill="#eee" /></svg>
        シンボル
      </button>
      <button aria-label="一覧" className="mr-1.5 ml-auto"><ChevronDown className="size-3.5" /></button>
    </div>
  </aside>
)

const App = () => {
  return (
    <div className="flex h-screen flex-col overflow-hidden border-t-2 border-[#f7f8f9] bg-[#eeeff1] font-['Open_Sans','Noto_Sans_CJK_JP',sans-serif]">
      <TitleBar />
      <MenuBar />
      <div className="flex min-h-0 flex-1 gap-1.5 pt-1 pr-1.5 pb-1.5 pl-[7px]">
        <ContentsPanel />
        <MapView />
        <PopupPanel />
      </div>
    </div>
  )
}

export default App
